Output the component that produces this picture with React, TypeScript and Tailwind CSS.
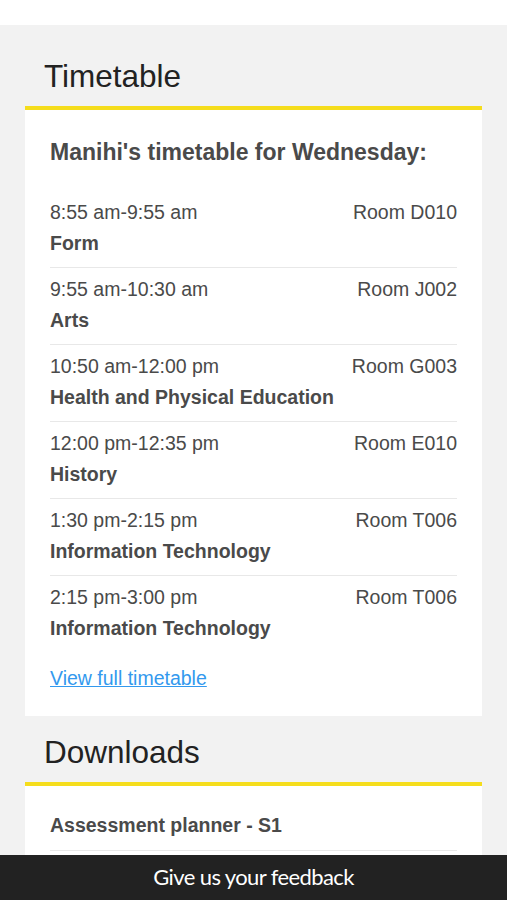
const lessons = [
  { time: '8:55 am-9:55 am', room: 'Room D010', subject: 'Form' },
  { time: '9:55 am-10:30 am', room: 'Room J002', subject: 'Arts' },
  { time: '10:50 am-12:00 pm', room: 'Room G003', subject: 'Health and Physical Education' },
  { time: '12:00 pm-12:35 pm', room: 'Room E010', subject: 'History' },
  { time: '1:30 pm-2:15 pm', room: 'Room T006', subject: 'Information Technology' },
  { time: '2:15 pm-3:00 pm', room: 'Room T006', subject: 'Information Technology' },
];

export default function App() {
  return (
    <div className="min-h-[900px] bg-white font-['Liberation_Sans',Arial,sans-serif]">
      <div className="h-[25px] bg-white" />
      <div className="bg-[#f2f2f2] px-[25px] pt-[36px] pb-[60px]">
        <div className="border-b-4 border-[#f5dd1c] pl-[19px] pb-[13px]">
          <h2 className="text-[31.5px] leading-none text-[#222]">Timetable</h2>
        </div>
        <div className="bg-white px-[25px] pt-[31px] pb-[26px]">
          <h3 className="text-[23px] font-bold text-[#4a4a4a] leading-none">Manihi's timetable for Wednesday:</h3>
          <div className="mt-[36px]">
            {lessons.map((l, i) => (
              <div key={i} className={i > 0 ? 'pt-[9px] pb-[13px] border-t border-[#e8e8e8]' : 'pb-[13px]'}>
                <div className="flex justify-between text-[19.5px] text-[#4a4a4a] leading-[24px]">
                  <span>{l.time}</span>
                  <span>{l.room}</span>
                </div>
                <div className="mt-[8px] text-[19.5px] font-bold text-[#4a4a4a] leading-[22px]">{l.subject}</div>
              </div>
            ))}
          </div>
          <a href="#" className="block mt-[14px] text-[19.5px] text-[#3399ee] underline leading-[24px]">View full timetable</a>
        </div>
        <div className="mt-[21px] border-b-4 border-[#f5dd1c] pl-[19px] pb-[14px]">
          <h2 className="text-[31.5px] leading-none text-[#222]">Downloads</h2>
        </div>
        <div className="bg-white px-[25px] pt-[28px]">
          <div className="text-[19.5px] font-bold text-[#4a4a4a] leading-[22px] pb-[14px] border-b border-[#e8e8e8]">Assessment planner - S1</div>
          <div className="h-[60px]" />
        </div>
      </div>
      <div className="fixed bottom-0 left-0 right-0 h-[45px] bg-[#222222] flex items-center justify-center pb-[3px]">
        <span className="font-['Lato',sans-serif] text-white text-[22px] tracking-[-0.6px]">Give us your feedback</span>
      </div>
    </div>
  );
}
